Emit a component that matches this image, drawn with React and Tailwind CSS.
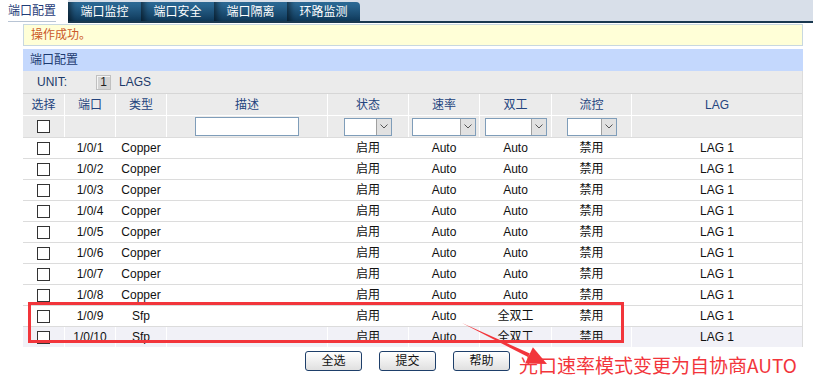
import React from "react";

const cols = ["w-[41px]", "w-[51px]", "w-[51px]", "w-[161px]", "w-[81px]", "w-[71px]", "w-[72px]", "w-[80px]", "flex-1"];

const rows = [
  ["1/0/1", "Copper", "启用", "Auto", "Auto", "禁用", "LAG 1"],
  ["1/0/2", "Copper", "启用", "Auto", "Auto", "禁用", "LAG 1"],
  ["1/0/3", "Copper", "启用", "Auto", "Auto", "禁用", "LAG 1"],
  ["1/0/4", "Copper", "启用", "Auto", "Auto", "禁用", "LAG 1"],
  ["1/0/5", "Copper", "启用", "Auto", "Auto", "禁用", "LAG 1"],
  ["1/0/6", "Copper", "启用", "Auto", "Auto", "禁用", "LAG 1"],
  ["1/0/7", "Copper", "启用", "Auto", "Auto", "禁用", "LAG 1"],
  ["1/0/8", "Copper", "启用", "Auto", "Auto", "禁用", "LAG 1"],
  ["1/0/9", "Sfp", "启用", "Auto", "全双工", "禁用", "LAG 1"],
  ["1/0/10", "Sfp", "启用", "Auto", "全双工", "禁用", "LAG 1"],
];

function Box() {
  return <div className="w-[13px] h-[13px] border border-[#333] bg-white" />;
}

function Select({ w }) {
  return (
    <div className={`${w} h-[18px] flex border border-[#7f9db9] bg-white`}>
      <div className="flex-1" />
      <div className="w-[15px] h-full bg-[#e1e1e1] border-l border-[#a0a0a0] flex items-center justify-center">
        <svg width="8" height="5" viewBox="0 0 8 5">
          <path d="M0.5 0.5 L4 4 L7.5 0.5" fill="none" stroke="#555" strokeWidth="1" />
        </svg>
      </div>
    </div>
  );
}

function Tab({ label, last }) {
  return (
    <div
      className={`w-[73px] h-[19px] flex items-center justify-center text-white text-[12px] bg-gradient-to-b from-[#2e6e9b] to-[#103a5b] shadow-[inset_7px_0_6px_-4px_rgba(0,0,0,0.55)] ${last ? "rounded-tr-[4px]" : ""}`}
    >
      {label}
    </div>
  );
}

export default function App() {
  const font = { fontFamily: '"Liberation Sans", "Noto Sans CJK SC", sans-serif' };
  return (
    <div className="w-[813px] h-[387px] bg-white relative overflow-hidden text-[12px]" style={font}>
      {/* tab bar */}
      <div className="flex h-[23px] bg-[#d8dfe9]">
        <div className="w-[68px] h-full bg-white flex items-start pl-[8px] pt-[3px]">
          <span className="text-[#1f3c78] border-b border-[#b8c4d4] leading-[17px] pb-[1px]">端口配置</span>
        </div>
        <div className="flex-1 flex items-end border-b-2 border-[#19384f]">
          <Tab label="端口监控" />
          <Tab label="端口安全" />
          <Tab label="端口隔离" />
          <Tab label="环路监测" last />
        </div>
      </div>

      <div className="pl-[23px] pr-[10px]">
        {/* message */}
        <div className="mt-[1px] h-[22px] bg-[#ffffd7] border border-[#c8d8e0] flex items-center pl-[7px] text-[#cc5a2b]">
          操作成功。
        </div>

        {/* panel */}
        <div className="mt-[3px]">
          <div className="h-[22px] bg-[#c4d8fd] flex items-center pl-[7px] text-[#1c3a70]">端口配置</div>
          <div className="bg-[#ebebeb] border-r border-[#dcdcdc]">
            <div className="h-[22px] flex items-center text-[#1c3a6a]">
              <span className="ml-[14px] w-[59px]">UNIT:</span>
              <span className="w-[15px] h-[15px] bg-[#d4d4d4] border border-[#c0c0c0] shadow-[inset_1px_1px_0_#f4f4f4] flex items-center justify-center text-[#222]">1</span>
              <span className="ml-[8px]">LAGS</span>
            </div>
            {/* header */}
            <div className="flex h-[22px] border-t border-[#d6d6d6] text-[#24447e]">
              {["选择", "端口", "类型", "描述", "状态", "速率", "双工", "流控", "LAG"].map((t, i) => (
                <div key={i} className={`${cols[i]} flex items-center justify-center ${i > 0 ? "border-l border-white" : ""}`}>
                  {t}
                </div>
              ))}
            </div>
            {/* filter */}
            <div className="flex h-[22px] border-t border-white">
              <div className={`${cols[0]} flex items-center justify-center`}><Box /></div>
              <div className={`${cols[1]} border-l border-white`} />
              <div className={`${cols[2]} border-l border-white`} />
              <div className={`${cols[3]} border-l border-white flex items-center justify-center`}>
                <div className="w-[104px] h-[19px] border border-[#7f9db9] bg-white" />
              </div>
              <div className={`${cols[4]} border-l border-white flex items-center justify-center`}><Select w="w-[48px]" /></div>
              <div className={`${cols[5]} border-l border-white flex items-center justify-center`}><Select w="w-[64px]" /></div>
              <div className={`${cols[6]} border-l border-white flex items-center justify-center`}><Select w="w-[62px]" /></div>
              <div className={`${cols[7]} border-l border-white flex items-center justify-center`}><Select w="w-[50px]" /></div>
              <div className={`${cols[8]} border-l border-white`} />
            </div>
            {/* rows */}
            {rows.map((r, ri) => {
              const last = ri === rows.length - 1;
              const cells = [null, r[0], r[1], "", r[2], r[3], r[4], r[5], r[6]];
              return (
                <div key={ri} className={`flex h-[21px] border-t border-[#dcdcdc] ${last ? "bg-[#f1f1f7]" : "bg-white"} text-[#111]`}>
                  {cells.map((c, i) => (
                    <div
                      key={i}
                      className={`${cols[i]} flex items-center justify-center ${i > 0 ? (last ? "border-l border-white" : "border-l border-transparent") : ""}`}
                    >
                      {i === 0 ? <Box /> : c}
                    </div>
                  ))}
                </div>
              );
            })}
          </div>
        </div>

        {/* buttons */}
        <div className="flex gap-[17px] ml-[282px] mt-[4px]">
          {["全选", "提交", "帮助"].map((t) => (
            <div
              key={t}
              className="w-[57px] h-[20px] border border-[#1e3f6a] rounded-[3px] bg-gradient-to-b from-white to-[#e0e0e0] flex items-center justify-center text-[#111]"
            >
              {t}
            </div>
          ))}
        </div>
      </div>

      {/* annotation overlay */}
      <div className="absolute left-[28px] top-[302px] w-[596px] h-[41px] border-[3px] border-[#f2353b]" />
      <svg className="absolute left-0 top-0" width="813" height="387">
        <polygon points="462,323 528.1,357.1 529.9,353.5" fill="#f2353b" />
        <polygon points="547,364 525.1,363.4 532.9,347.2" fill="#f2353b" />
      </svg>
      <div className="absolute left-[519px] top-[352px] text-[19px] leading-[26px] text-[#f2353b] whitespace-nowrap" style={{ fontFamily: '"Noto Sans CJK SC", "Liberation Sans", sans-serif' }}>
        光口速率模式变更为自协商AUTO
      </div>
    </div>
  );
}
